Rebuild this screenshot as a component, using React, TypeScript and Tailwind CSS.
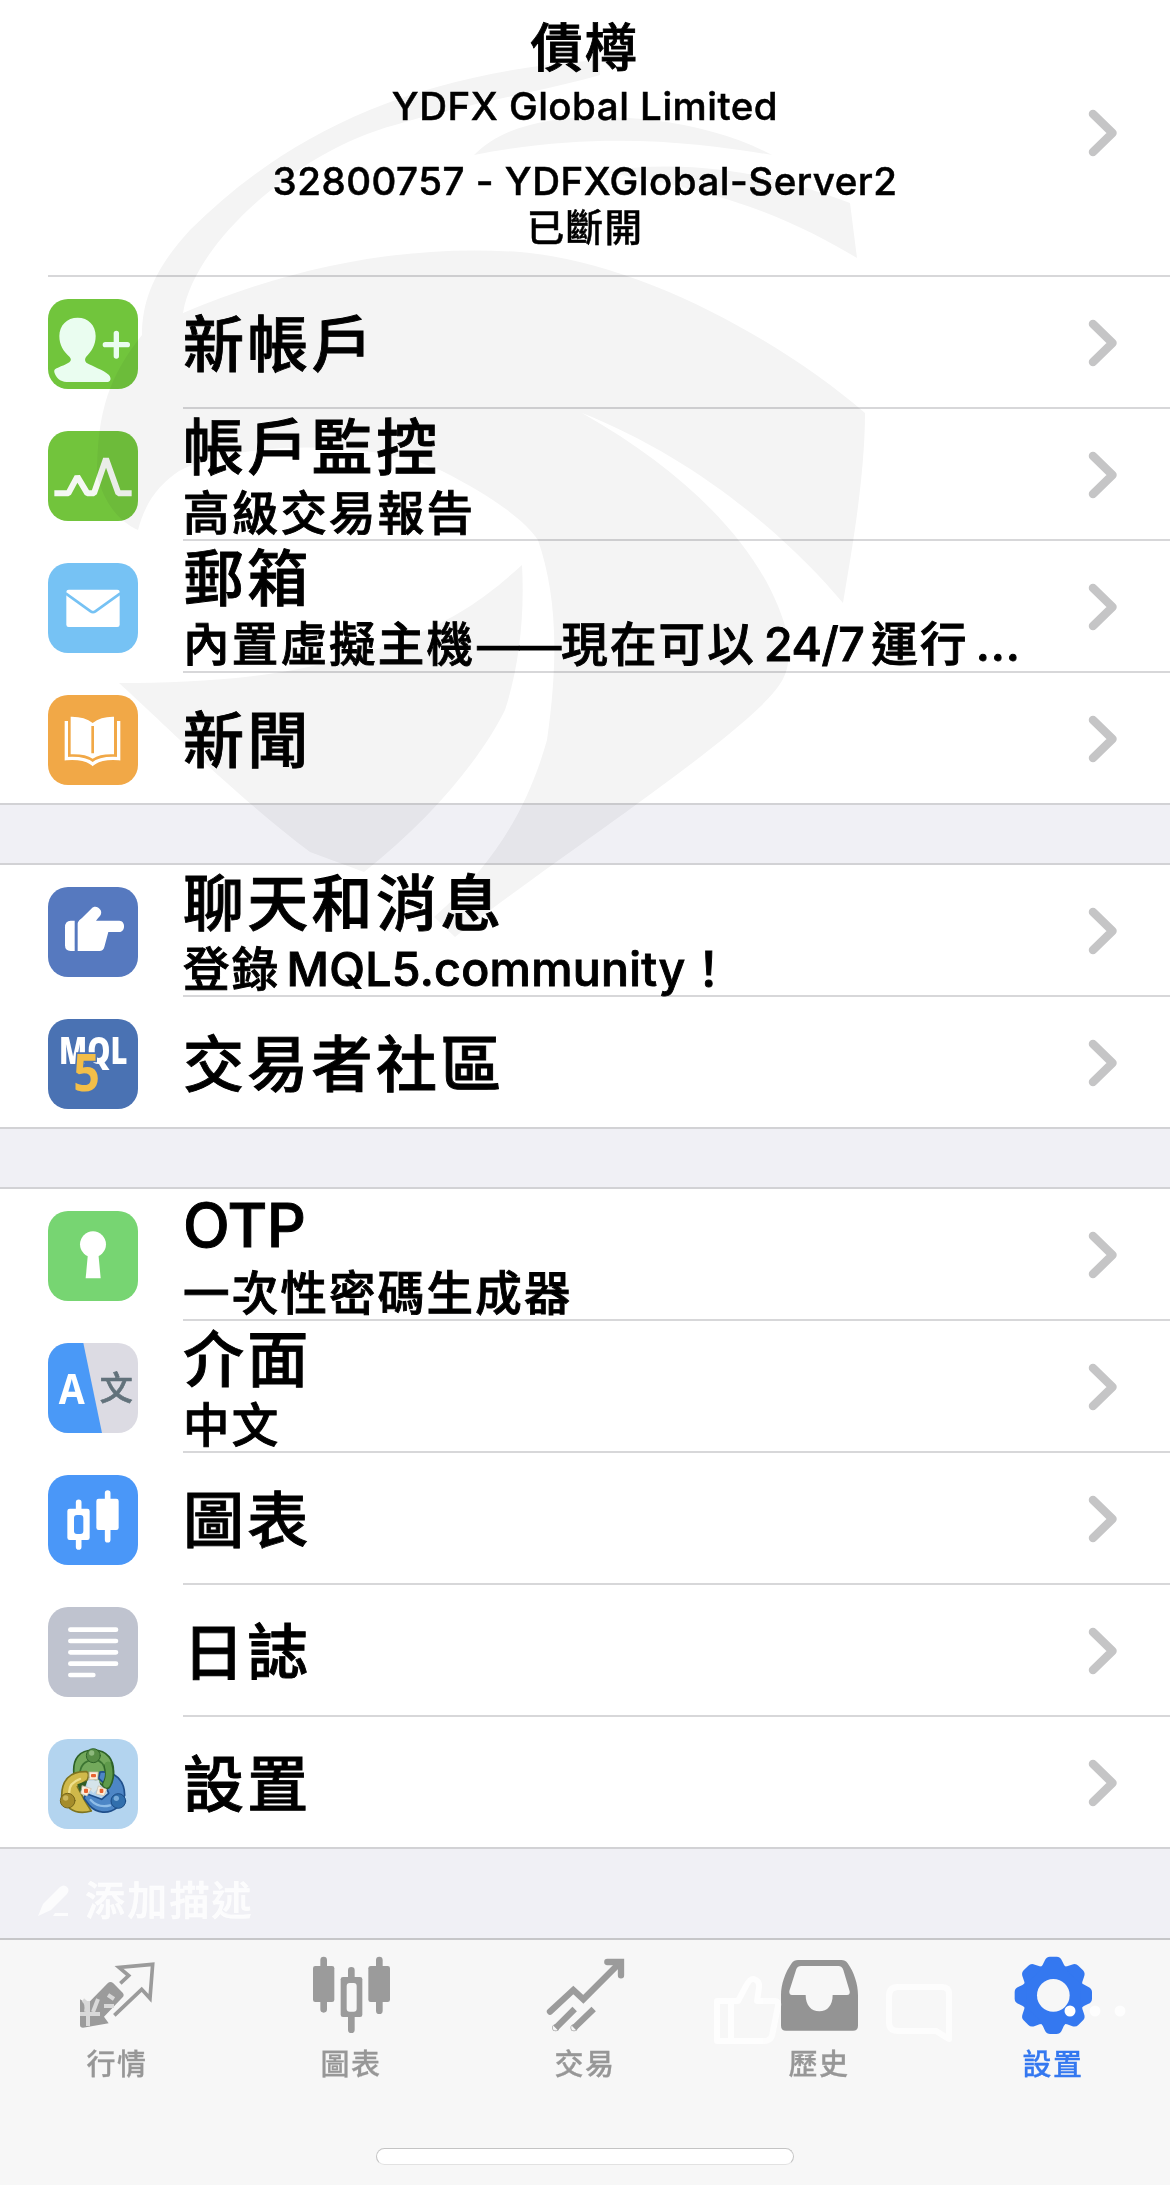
import type { ReactNode } from "react";
import clsx from "clsx";

interface MenuItem {
  id: string;
  title: ReactNode;
  subtitle?: ReactNode;
  tile: string;
  viewBox: string;
  icon: ReactNode;
}

interface TabItem {
  id: string;
  label: string;
  viewBox: string;
  icon: ReactNode;
  active?: boolean;
}

const accountItems: MenuItem[] = [
  {
    id: "new-account",
    title: "新帳戶",
    tile: "bg-[#71c53c]",
    viewBox: "54 57 270 270",
    icon: (
      <g fill="#eafdf0">
        <path d="M143 113C175 113 197 136 197 168C197 195 185 214 168 231C164 237 164 243 169 248C190 260 219 269 236 284C246 295 242 306 230 306H110C90 306 77 292 73 277C71 269 75 266 84 263C96 258 108 254 118 247C124 242 124 237 119 231C100 214 88 195 88 168C88 136 111 113 143 113Z" />
        <path d="M259 160V228M226 194H292" stroke="#eafdf0" strokeWidth="16" strokeLinecap="round" />
      </g>
    ),
  },
  {
    id: "monitoring",
    title: "帳戶監控",
    subtitle: "高級交易報告",
    tile: "bg-[#72c43c]",
    viewBox: "54 453 270 270",
    icon: (
      <path
        d="M73 640H115L142 590L172 640H192L228 536L265 640H305"
        fill="none"
        stroke="#f5f8f3"
        strokeWidth="18"
        strokeLinejoin="bevel"
      />
    ),
  },
  {
    id: "mailbox",
    title: "郵箱",
    subtitle: (
      <>
        內置虛擬主機
        <span className="ml-[2px] text-[42px] tracking-normal">——</span>
        現在可以
        <span className="ml-[8px] mr-[7px] tracking-[-0.5px]">24/7</span>
        運行
        <span className="ml-[7px] tracking-[1px]">...</span>
      </>
    ),
    tile: "bg-[#76c2f4]",
    viewBox: "54 69 270 270",
    icon: (
      <>
        <rect x="109" y="149" width="160" height="112" rx="7" fill="#fff" />
        <path d="M107 160L182 214Q189 219 196 214L271 160" fill="none" stroke="#76c2f4" strokeWidth="8" />
      </>
    ),
  },
  {
    id: "news",
    title: "新聞",
    tile: "bg-[#f1a847]",
    viewBox: "54 465 270 270",
    icon: (
      <>
        <path
          d="M122 530Q163 529 188 549Q213 529 252 530V643Q211 641 188 656Q165 641 122 643Z"
          fill="#fff"
        />
        <path d="M188 558V640" stroke="#f1a847" strokeWidth="8" />
        <path
          d="M109 543V656Q164 652 188 672Q212 652 266 656V543"
          fill="none"
          stroke="#fff"
          strokeWidth="10"
        />
      </>
    ),
  },
];

const communityItems: MenuItem[] = [
  {
    id: "chat",
    title: "聊天和消息",
    subtitle: (
      <>
        登錄<span className="ml-[6px] tracking-[0.300px]">MQL5.community</span>！
      </>
    ),
    tile: "bg-[#5679bf]",
    viewBox: "54 51 270 270",
    icon: (
      <g fill="#fff">
        <path d="M134 152V243H122Q105 243 105 226V172Q105 152 122 152Z" />
        <path d="M143 243V162C143 153 151 149 159 141L184 116C192 107 204 109 211 119C217 128 212 137 205 143L198 152H268C287 152 287 186 268 186H235L223 231Q220 243 208 243Z" />
      </g>
    ),
  },
  {
    id: "mql5",
    title: "交易者社區",
    tile: "bg-[#4a72b3]",
    viewBox: "54 447 270 270",
    icon: (
      <g className="font-['Open_Sans',sans-serif]">
        <text
          x="87"
          y="582"
          fontSize="112"
          fontWeight="800"
          textLength="205"
          lengthAdjust="spacingAndGlyphs"
          fill="#fff"
        >
          MQL
        </text>
        <text
          x="130"
          y="662"
          fontSize="158"
          fontWeight="700"
          textLength="80"
          lengthAdjust="spacingAndGlyphs"
          fill="#f3be48"
          stroke="#4a72b3"
          strokeWidth="10"
          paintOrder="stroke"
        >
          5
        </text>
      </g>
    ),
  },
];

const toolItems: MenuItem[] = [
  {
    id: "otp",
    title: <span className="relative top-[-3px] tracking-[-0.5px]">OTP</span>,
    subtitle: "一次性密碼生成器",
    tile: "bg-[#77d572]",
    viewBox: "54 63 270 270",
    icon: (
      <g fill="#fff">
        <circle cx="189" cy="163" r="39" />
        <path d="M174 190H205L212 265H167Z" />
      </g>
    ),
  },
  {
    id: "language",
    title: "介面",
    subtitle: "中文",
    tile: "bg-[#dcdbe3]",
    viewBox: "54 459 270 270",
    icon: (
      <>
        <path d="M54 459H160L216 729H54Z" fill="#4a99f7" />
        <text
          x="86"
          y="641"
          fontSize="126"
          fontWeight="700"
          textLength="78"
          lengthAdjust="spacingAndGlyphs"
          fill="#fff"
          className="font-['Open_Sans',sans-serif]"
        >
          A
        </text>
        <text
          x="209"
          y="630"
          fontSize="99"
          fontWeight="500"
          fill="#62727b"
          stroke="#62727b"
          strokeWidth="2"
          className="font-['Noto_Sans_CJK_TC',sans-serif]"
        >
          文
        </text>
      </>
    ),
  },
  {
    id: "charts",
    title: "圖表",
    tile: "bg-[#4a97f8]",
    viewBox: "54 75 270 270",
    icon: (
      <>
        <path d="M146 157V291M233 129V269" stroke="#fff" strokeWidth="17" strokeLinecap="round" />
        <rect x="112" y="176" width="67" height="94" rx="7" fill="#fff" />
        <rect x="132" y="195" width="28" height="57" rx="9" fill="#4a97f8" />
        <rect x="199" y="146" width="67" height="94" rx="7" fill="#fff" />
      </>
    ),
  },
  {
    id: "journal",
    title: "日誌",
    tile: "bg-[#bfc3cf]",
    viewBox: "54 471 270 270",
    icon: (
      <path
        d="M121 539H258M121 573H258M121 607H258M121 641H258M121 675H190"
        stroke="#fff"
        strokeWidth="14"
        strokeLinecap="round"
      />
    ),
  },
  {
    id: "settings",
    title: "設置",
    tile: "bg-[#b3d4ef]",
    viewBox: "54 867 270 270",
    icon: <PeopleEmblem />,
  },
];

const tabs: TabItem[] = [
  {
    id: "quotes",
    label: "行情",
    viewBox: "225 345 252 240",
    icon: (
      <>
        <path
          d="M361 430L386 407L357 382L458 373L450 475L425 448L343 526"
          fill="none"
          stroke="#9b9b9b"
          strokeWidth="11"
        />
        <path
          d="M240 478L262 492L323 430Q331 422 340 430L368 458Q374 465 368 472L312 530L326 550L249 563Q240 563 240 555Z"
          fill="#9b9b9b"
        />
      </>
    ),
  },
  {
    id: "charts",
    label: "圖表",
    viewBox: "927 345 252 240",
    icon: (
      <>
        <path
          d="M971 360V508M1138 360V512M1054 391V569"
          stroke="#9b9b9b"
          strokeWidth="20"
          strokeLinecap="round"
        />
        <rect x="939" y="378" width="64" height="108" rx="7" fill="#9b9b9b" />
        <rect x="1105" y="378" width="65" height="108" rx="7" fill="#9b9b9b" />
        <rect x="1022" y="411" width="65" height="120" rx="7" fill="#9b9b9b" />
        <rect x="1040" y="429" width="30" height="86" rx="9" fill="#f7f7f7" />
      </>
    ),
  },
  {
    id: "trade",
    label: "交易",
    viewBox: "429 345 252 240",
    icon: (
      <g fill="none" stroke="#9b9b9b" strokeWidth="19">
        <path d="M450 515L520 450L550 478L655 373" strokeLinecap="round" />
        <path d="M622 366H663V406" strokeLinecap="round" />
        <path d="M467 564L524 507M522 564L581 507" />
        <circle cx="467" cy="563" r="1" />
        <circle cx="522" cy="563" r="1" />
      </g>
    ),
  },
  {
    id: "history",
    label: "歷史",
    viewBox: "21 345 252 240",
    icon: (
      <path
        d="M84 360H214Q226 360 233 370C252 396 264 433 264 466V557Q264 572 249 572H48Q33 572 33 557V466C33 433 46 396 65 370Q72 360 84 360ZM93 378Q83 378 79 387L58 453Q57 465 66 465H107C107 496 124 514 148 514C172 514 188 496 188 465H231Q241 465 239 454L220 390Q216 378 205 378Z"
        fill="#949494"
        fillRule="evenodd"
      />
    ),
  },
  {
    id: "settings",
    label: "設置",
    viewBox: "723 345 252 240",
    active: true,
    icon: <Gear />,
  },
];

const toothAngles = [0, 45, 90, 135, 180, 225, 270, 315];

function Gear() {
  return (
    <g fill="#3478f0">
      <circle cx="850" cy="466" r="92" />
      {toothAngles.map((angle) => (
        <path
          key={angle}
          d="M810 385Q818 377 824 362Q829 350 840 350H860Q871 350 876 362Q882 377 890 385Z"
          transform={`rotate(${angle} 850 466)`}
        />
      ))}
      <circle cx="850" cy="466" r="49" fill="#f7f7f7" />
    </g>
  );
}

function PeopleEmblem() {
  return (
    <g strokeLinecap="round" strokeLinejoin="round">
      {/* green, top */}
      <path d="M132 975C126 925 150 900 190 900C232 900 254 930 250 975V1000L225 1012L190 985L150 975Z" fill="#73a95c" stroke="#2d6127" strokeWidth="5" />
      <path d="M150 972Q150 935 190 928Q222 930 226 966" fill="none" stroke="#3c7532" strokeWidth="5" />
      {/* yellow, left */}
      <path d="M170 965C120 962 94 992 95 1040L120 1076C140 1090 160 1090 184 1083L166 1055L142 1010L172 990Q180 970 170 965Z" fill="#d0b94a" stroke="#7d7420" strokeWidth="5" />
      <path d="M118 1030Q115 1000 150 987" fill="none" stroke="#efe08c" strokeWidth="7" />
      <path d="M142 1003L172 992L166 1010L150 1026Z" fill="#315d25" />
      {/* blue, right */}
      <path d="M210 966C255 962 284 992 284 1036L262 1072C235 1094 200 1090 178 1066L162 1045Q164 1032 178 1034L215 1048L236 1030L226 1004L206 985Z" fill="#4d86c6" stroke="#1f4f8b" strokeWidth="5" />
      <path d="M182 1050Q205 1075 240 1066" fill="none" stroke="#8fbde8" strokeWidth="7" />
      {/* green arm reaching down */}
      <path d="M236 950Q244 980 230 1004" fill="none" stroke="#2d6127" strokeWidth="28" />
      <path d="M234 945Q243 978 230 1003" fill="none" stroke="#5f9a4b" strokeWidth="20" />
      <path d="M172 992L206 990L212 1008L190 1030L172 1010Z" fill="#d5e4ea" />
      <g stroke="#c9bda8" strokeWidth="2" fill="#fbeeda">
        <path d="M178 966H204L203 989H178Z" />
        <path d="M157 1007L184 1016L171 1038L153 1031Z" />
        <path d="M206 1008L230 1018L222 1037L199 1032Z" />
      </g>
      <g fill="#e8622f">
        <rect x="183" y="972" width="15" height="10" rx="3" />
        <rect x="162" y="1016" width="12" height="13" rx="3" />
        <rect x="209" y="1016" width="11" height="13" rx="3" />
      </g>
      <circle cx="190" cy="917" r="21" fill="#578d46" stroke="#2f6429" strokeWidth="3" />
      <circle cx="185" cy="909" r="8" fill="#8db97d" />
      <circle cx="113" cy="1052" r="22" fill="#a58c2b" stroke="#75651a" strokeWidth="3" />
      <circle cx="107" cy="1044" r="8" fill="#cbb75c" />
      <circle cx="265" cy="1053" r="22" fill="#316fad" stroke="#1c4c85" strokeWidth="3" />
      <circle cx="259" cy="1045" r="8" fill="#76a9d8" />
    </g>
  );
}

function Chevron() {
  return (
    <svg viewBox="0 0 30 48" className="h-[48px] w-[30px] shrink-0" fill="none">
      <path d="M5 5L24.500 24L5 43" stroke="#c5c5c6" strokeWidth="8.500" strokeLinecap="round" strokeLinejoin="round" />
    </svg>
  );
}

function MenuRow({ item, last }: { item: MenuItem; last: boolean }) {
  return (
    <div className={clsx("flex h-[132px] pl-[48px]", last && "border-b-2 border-[#d2d2d5]")}>
      <div className={clsx("mt-[22px] h-[90px] w-[90px] shrink-0 overflow-hidden rounded-[20px]", item.tile)}>
        <svg viewBox={item.viewBox} className="block h-full w-full">
          {item.icon}
        </svg>
      </div>
      <div
        className={clsx(
          "ml-[45px] flex min-w-0 flex-1 items-center justify-between pr-[52px] pt-[2px]",
          !last && "border-b-2 border-[#d7d7d9]",
        )}
      >
        <div className="flex h-full flex-col justify-center whitespace-nowrap [-webkit-text-stroke:0.9px_black]">
          <p className={clsx("text-[61px] leading-[64px] tracking-[3.300px]", item.subtitle ? "mt-[2px]" : "mt-[3px]")}>
            {item.title}
          </p>
          {item.subtitle && (
            <p className="mt-[9px] text-[46.500px] leading-[48px] tracking-[2.200px]">{item.subtitle}</p>
          )}
        </div>
        <Chevron />
      </div>
    </div>
  );
}

function MenuGroup({ items }: { items: MenuItem[] }) {
  return (
    <section className="bg-white">
      {items.map((item, index) => (
        <MenuRow key={item.id} item={item} last={index === items.length - 1} />
      ))}
    </section>
  );
}

function Watermark() {
  return (
    <svg
      viewBox="0 0 1170 960"
      className="pointer-events-none absolute left-0 top-0 h-[960px] w-[1170px] mix-blend-multiply"
      fill="#f4f4f4"
    >
      <path d="M600 60C420 72 290 130 190 230C155 268 142 300 142 335C110 375 97 410 97 476C105 505 120 522 138 530C146 500 160 484 179 471C240 440 370 440 440 470C490 495 525 520 538 540C555 590 560 650 547 740C530 800 500 860 434 917L455 937C540 870 700 765 761 706C785 682 791 672 788 637C770 560 700 480 582 413C700 460 790 540 843 603C850 560 865 480 865 413C780 340 640 262 520 252C400 244 290 268 183 313C195 240 300 150 395 125C460 105 540 92 600 75Z" />
      <path d="M522 565C478 605 430 640 313 666C250 680 180 683 119 683C160 720 240 800 310 852L364 872C430 820 480 760 505 710C518 670 525 620 522 565Z" />
      <path d="M474 155C510 118 580 112 652 120C700 126 740 138 772 155C700 143 600 130 474 155Z" />
      <path d="M600 172C700 155 790 180 850 203L857 258C800 224 730 190 600 172Z" />
    </svg>
  );
}

// Faint white icons of the viewer toolbar lying over the tab bar
function ViewerToolbar() {
  return (
    <svg
      viewBox="0 1940 1170 245"
      className="pointer-events-none absolute left-0 top-0 h-[245px] w-[1170px]"
      fill="none"
      stroke="#fff"
      strokeLinejoin="round"
    >
      <g stroke="#d9d9d9" strokeWidth="4">
        <path d="M80 2014H100M88 2001V2026M83 2000Q88 2003 86 2012M98 1999L93 2012M104 2006H114M108 1995L114 1999" />
      </g>
      <g opacity="0.8" strokeWidth="6">
        <path d="M717 2001H731V2041H717ZM731 2001H738L746 1986Q750 1978 754 1979Q760 1981 759 1988L757 2001H775Q779 2001 778 2006L772 2036Q770 2041 764 2041H731" />
        <path d="M898 1987H942Q949 1987 949 1994V2039L936 2031H898Q889 2031 889 2022V1996Q889 1987 898 1987Z" />
      </g>
      <g fill="#fff" stroke="none">
        <circle cx="1070" cy="2011" r="5.500" />
        <circle cx="1095" cy="2011" r="5.500" opacity="0.8" />
        <circle cx="1120" cy="2011" r="5.500" opacity="0.8" />
      </g>
    </svg>
  );
}

export default function App() {
  return (
    <div className="relative flex h-[2185px] w-[1170px] flex-col overflow-hidden bg-[#f0f0f5] font-['Inter','Noto_Sans_CJK_TC',sans-serif] font-medium text-black">
      <header className="h-[277px] bg-white pl-[48px]">
        <div className="flex h-full border-b-2 border-[#d7d7d9] pr-[52px]">
          <div className="ml-[34px] flex h-full flex-1 flex-col items-center whitespace-nowrap [-webkit-text-stroke:0.5px_black]">
            <h1 className="mt-[17px] text-[52px] font-medium leading-[64px] tracking-[2.500px] [-webkit-text-stroke:0.9px_black]">
              債樽
            </h1>
            <p className="mt-[1px] text-[38.500px] leading-[48px] tracking-[0.500px]">YDFX Global Limited</p>
            <p className="mt-[27px] text-[38.500px] leading-[48px] tracking-[0.500px]">32800757 - YDFXGlobal-Server2</p>
            <p className="mt-[1px] text-[37.500px] leading-[44px] tracking-[1.300px]">已斷開</p>
          </div>
          <div className="mt-[109px]">
            <Chevron />
          </div>
        </div>
      </header>

      <MenuGroup items={accountItems} />
      <div className="h-[60px] border-b-2 border-[#d2d2d5]" />
      <MenuGroup items={communityItems} />
      <div className="h-[60px] border-b-2 border-[#d2d2d5]" />
      <MenuGroup items={toolItems} />

      <div className="flex h-[89px] items-center pl-[38px] pt-[15px] text-white/80">
        <svg viewBox="0 0 32 32" className="h-[32px] w-[32px]" fill="currentColor">
          <path d="M0 31L5 19L22 2Q26 -1 29 2Q32 5 29 9L13 25ZM17 28H30V31H15Z" />
        </svg>
        <p className="ml-[15px] text-[40px] leading-[48px] tracking-[2.200px] [-webkit-text-stroke:0.5px]">添加描述</p>
      </div>

      <footer className="relative flex-1 border-t-2 border-[#c6c6c8] bg-[#f7f7f7]">
        <nav className="grid grid-cols-5">
          {tabs.map((tab) => (
            <div
              key={tab.id}
              className={clsx("flex flex-col items-center pt-[15px]", tab.active ? "text-[#3478f0]" : "text-[#979797]")}
            >
              <svg viewBox={tab.viewBox} className="h-[80px] w-[84px]">
                {tab.icon}
              </svg>
              <span className="mt-[10px] text-[29px] leading-[40px] tracking-[1.500px] [-webkit-text-stroke:0.3px]">
                {tab.label}
              </span>
            </div>
          ))}
        </nav>
        <ViewerToolbar />
        <div className="mx-auto mt-[63px] h-[17px] w-[418px] rounded-full border border-[#c4c4c4] border-b-[#e2e2e2] bg-white" />
      </footer>

      <Watermark />
    </div>
  );
}
